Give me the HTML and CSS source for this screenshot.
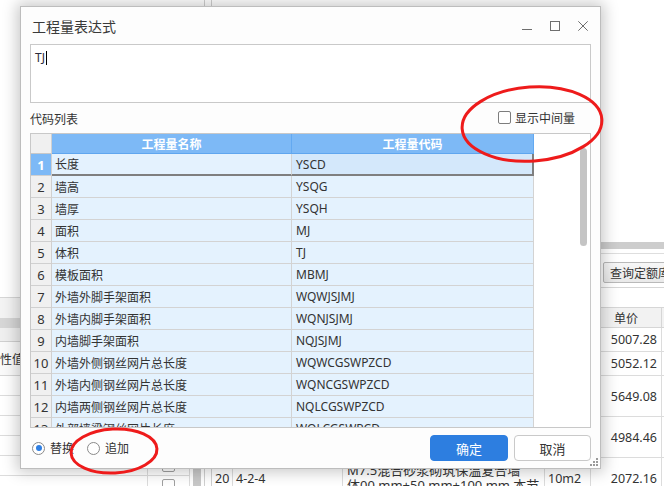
FILE: index.html
```html
<!DOCTYPE html>
<html lang="zh-CN">
<head>
<meta charset="utf-8">
<title>工程量表达式</title>
<link rel="stylesheet" href="styles.css">
</head>
<body>
<div class="app">
  <div class="left-pane">
    <div class="lp-top"></div>
    <div class="lp-cap"></div>
    <div class="lp-band"></div>
    <div class="lp-sub"></div>
    <div class="lp-body">
      <div class="lp-table">
        <div class="lp-head"><span class="lp-head-text">属性值</span></div>
        <div class="lp-row"><div class="lp-cell"></div><div class="lp-chk"></div></div>
        <div class="lp-row"><div class="lp-cell"></div><div class="lp-chk"></div></div>
        <div class="lp-row"><div class="lp-cell"></div><div class="lp-chk"></div></div>
        <div class="lp-row"><div class="lp-cell"></div><div class="lp-chk"></div></div>
        <div class="lp-row"><div class="lp-cell"></div><div class="lp-chk"><span class="cb"></span></div></div>
        <div class="lp-row"><div class="lp-cell"></div><div class="lp-chk"><span class="cb"></span></div></div>
      </div>
      <div class="lp-vscroll"><div class="lp-thumb"></div></div>
    </div>
  </div>
  <div class="splitter"></div>
  <div class="main-pane">
    <div class="mp-top"></div>
    <div class="mp-hscroll"></div>
    <div class="mp-gap"></div>
    <div class="mp-toolbar"><button class="tb-btn">查询定额库</button></div>
    <div class="mp-gap2"></div>
    <div class="mt">
      <div class="mt-h"></div><div class="mt-h"></div><div class="mt-h"></div><div class="mt-h"></div><div class="mt-h center">单价</div><div class="mt-h"></div>
      <div class="mt-c"></div><div class="mt-c"></div><div class="mt-c"></div><div class="mt-c"></div><div class="mt-c num">5007.28</div><div class="mt-c"></div>
      <div class="mt-c"></div><div class="mt-c"></div><div class="mt-c"></div><div class="mt-c"></div><div class="mt-c num">5052.12</div><div class="mt-c"></div>
      <div class="mt-c"></div><div class="mt-c"></div><div class="mt-c"></div><div class="mt-c"></div><div class="mt-c num">5649.08</div><div class="mt-c"></div>
      <div class="mt-c"></div><div class="mt-c"></div><div class="mt-c"></div><div class="mt-c"></div><div class="mt-c num">4984.46</div><div class="mt-c"></div>
      <div class="mt-c idx">20</div><div class="mt-c">4-2-4</div><div class="mt-c name"><span class="nl">M7.5混合砂浆砌筑保温复合墙</span><span class="nl">体00 mm+50 mm+100 mm 本节</span></div><div class="mt-c">10m2</div><div class="mt-c num">2072.16</div><div class="mt-c"></div>
    </div>
  </div>

  <div class="dialog">
    <div class="dlg-title">
      <span class="dlg-caption">工程量表达式</span>
      <div class="win-ctrls">
        <svg class="wc" viewBox="0 0 10 10"><path d="M0 8.5H10"/></svg>
        <svg class="wc" viewBox="0 0 10 10"><rect x="0.5" y="0.5" width="9" height="9"/></svg>
        <svg class="wc" viewBox="0 0 10 10"><path d="M0.3 0.3L9.7 9.7M9.7 0.3L0.3 9.7"/></svg>
      </div>
    </div>
    <div class="expr-box"><span class="expr-text">TJ</span><span class="caret"></span></div>
    <div class="list-bar">
      <span class="list-label">代码列表</span>
      <label class="chk"><span class="chk-box"></span>显示中间量</label>
    </div>
    <div class="grid-box">
      <div class="grid">
        <div class="c-corner"></div><div class="c-hd">工程量名称</div><div class="c-hd">工程量代码</div>
        <div class="c-no sel">1</div><div class="c-name cur">长度</div><div class="c-code cur cur-cell">YSCD</div>
        <div class="c-no">2</div><div class="c-name">墙高</div><div class="c-code">YSQG</div>
        <div class="c-no">3</div><div class="c-name">墙厚</div><div class="c-code">YSQH</div>
        <div class="c-no">4</div><div class="c-name">面积</div><div class="c-code">MJ</div>
        <div class="c-no">5</div><div class="c-name">体积</div><div class="c-code">TJ</div>
        <div class="c-no">6</div><div class="c-name">模板面积</div><div class="c-code">MBMJ</div>
        <div class="c-no">7</div><div class="c-name">外墙外脚手架面积</div><div class="c-code">WQWJSJMJ</div>
        <div class="c-no">8</div><div class="c-name">外墙内脚手架面积</div><div class="c-code">WQNJSJMJ</div>
        <div class="c-no">9</div><div class="c-name">内墙脚手架面积</div><div class="c-code">NQJSJMJ</div>
        <div class="c-no">10</div><div class="c-name">外墙外侧钢丝网片总长度</div><div class="c-code">WQWCGSWPZCD</div>
        <div class="c-no">11</div><div class="c-name">外墙内侧钢丝网片总长度</div><div class="c-code">WQNCGSWPZCD</div>
        <div class="c-no">12</div><div class="c-name">内墙两侧钢丝网片总长度</div><div class="c-code">NQLCGSWPZCD</div>
        <div class="c-no">13</div><div class="c-name">外部墙梁钢丝网片长度</div><div class="c-code">WQLCGSWPCD</div>
      </div>
      <div class="g-side"><div class="g-thumb"></div></div>
    </div>
    <div class="dlg-foot">
      <label class="radio on"><span class="rb"></span>替换</label>
      <label class="radio"><span class="rb"></span>追加</label>
      <div class="btns">
        <button class="btn primary">确定</button>
        <button class="btn">取消</button>
      </div>
    </div>
    <svg class="grip" viewBox="0 0 8 8"><rect x="6" y="0" width="2" height="2"/><rect x="3" y="3" width="2" height="2"/><rect x="6" y="3" width="2" height="2"/><rect x="0" y="6" width="2" height="2"/><rect x="3" y="6" width="2" height="2"/><rect x="6" y="6" width="2" height="2"/></svg>
  </div>

  <svg class="annot" viewBox="0 0 664 486">
    <ellipse cx="532" cy="124" rx="70" ry="37" transform="rotate(-4 532 124)"/>
    <ellipse cx="114" cy="451" rx="43" ry="22" transform="rotate(-3 114 451)"/>
  </svg>
</div>
</body>
</html>
```

FILE: styles.css
```css
* { box-sizing: border-box; }
html, body { margin: 0; padding: 0; }
body {
  width: 664px; height: 486px; overflow: hidden;
  font-family: "Noto Sans", "Noto Sans CJK SC", sans-serif;
  font-size: 12px; color: #333; background: #fff;
}
.app { position: relative; width: 664px; height: 486px; display: flex; overflow: hidden; background: #fff; }

/* ---------- background: left pane ---------- */
.left-pane { width: 205px; flex: none; border-right: 1px solid #d0d0d0; display: flex; flex-direction: column; }
.lp-top { height: 298px; flex: none; border-bottom: 1px solid #d6d6d6; }
.lp-cap { height: 20px; flex: none; background: #f3f3f3; }
.lp-band { height: 10px; flex: none; background: #d6d6d6; }
.lp-sub { height: 14px; flex: none; background: #efefef; border-bottom: 1px solid #d0d0d0; }
.lp-body { flex: 1; display: flex; overflow: hidden; }
.lp-table { flex: 1; }
.lp-head { height: 34px; display: flex; align-items: center; border-bottom: 1px solid #d6d6d6; background: #fafafa; font-size: 12px; }
.lp-head-text { margin-left: -12px; }
.lp-row { height: 20px; display: grid; grid-template-columns: 148px 1fr; border-bottom: 1px solid #dcdcdc; }
.lp-cell { border-right: 1px solid #dcdcdc; }
.lp-chk { display: flex; align-items: center; justify-content: center; border-right: 1px solid #dcdcdc; }
.cb { width: 13px; height: 13px; border: 1px solid #a0a0a0; border-radius: 2px; background: #fff; }
.lp-vscroll { width: 14px; flex: none; padding: 64px 3px 0 3px; }
.lp-thumb { width: 8px; height: 100px; background: #c8c8c8; }

.splitter { width: 7px; flex: none; border-right: 1px solid #d0d0d0; }

/* ---------- background: main pane ---------- */
.main-pane { flex: 1; display: flex; flex-direction: column; min-width: 0; }
.mp-top { height: 242px; flex: none; }
.mp-hscroll { height: 7px; flex: none; background: #cdcdcd; }
.mp-gap { height: 5px; flex: none; border-bottom: 1px solid #dedede; }
.mp-toolbar { height: 34px; flex: none; padding: 8px 0 0 391px; border-bottom: 1px solid #d6d6d6; display: flex; }
.tb-btn {
  height: 21px; padding: 0 6px; white-space: nowrap;
  font: 12px "Noto Sans", "Noto Sans CJK SC", sans-serif; color: #333;
  background: linear-gradient(#f7f7f7, #e9e9e9); border: 1px solid #b9b9b9; border-radius: 2px;
}
.mp-gap2 { height: 19px; flex: none; }
.mt {
  display: grid;
  grid-template-columns: 21px 110px 202px 46px 71px 1fr;
  grid-template-rows: 21px 24px 24px 41px 41px 42px;
  font-size: 12px;
}
.mt-h { background: #f2f2f2; border-right: 1px solid #d6d6d6; border-bottom: 1px solid #d6d6d6; border-top: 1px solid #d6d6d6; display: flex; align-items: center; }
.mt-h.center { justify-content: center; }
.mt-c { border-right: 1px solid #dcdcdc; border-bottom: 1px solid #dcdcdc; display: flex; align-items: center; padding-left: 3px; white-space: nowrap; overflow: hidden; font-size: 12.5px; }
.mt-c.num { justify-content: flex-end; padding: 0 4px 0 0; }
.mt-c.idx { padding-left: 3px; }
.mt-c.name { flex-direction: column; align-items: flex-start; justify-content: flex-start; padding: 5px 0 0 4px; font-size: 13px; }
.nl { display: block; height: 15px; line-height: 15px; }

/* ---------- dialog ---------- */
.dialog {
  position: absolute; left: 20px; top: 6px; width: 581px; height: 463px;
  background: #fdfdfd; border: 1px solid #bdbdbd;
  box-shadow: 0 0 14px 3px rgba(0, 0, 0, 0.22);
  display: flex; flex-direction: column; padding: 0 9px;
}
.dlg-title { height: 37px; flex: none; display: flex; align-items: center; justify-content: space-between; margin: 0 -9px; padding: 0 12px 0 11px; }
.dlg-caption { font-size: 14px; color: #3a3a3a; }
.win-ctrls { display: flex; gap: 18px; align-items: center; }
.wc { width: 10px; height: 10px; fill: none; stroke: #6e6e6e; stroke-width: 1; display: block; }

.expr-box { height: 59px; flex: none; border: 1px solid #c9c9c9; background: #fff; padding: 5px 0 0 4px; display: flex; align-items: flex-start; }
.expr-text { font-size: 12px; line-height: 16px; color: #2c2c3c; }
.caret { width: 1px; height: 14px; background: #000; margin: 1px 0 0 1px; }

.list-bar { height: 30px; flex: none; display: flex; align-items: center; justify-content: space-between; padding: 2px 16px 0 0; }
.list-label { font-size: 12px; color: #333; }
.chk { display: flex; align-items: center; gap: 4px; font-size: 12px; color: #333; margin-top: -3px; }
.chk-box { width: 13px; height: 13px; border: 1px solid #7d7d7d; border-radius: 2px; background: #fff; }

.grid-box { height: 295px; flex: none; border: 1px solid #c8c8c8; display: flex; overflow: hidden; background: #fff; }
.grid {
  flex: none; align-self: flex-start;
  display: grid; grid-template-columns: 21px 240px 242px;
  grid-template-rows: 20px; grid-auto-rows: 22px;
  font-size: 12px;
}
.c-corner { background: #f0f0f0; border-right: 1px solid #d0d0d0; border-bottom: 1px solid #c8c8c8; }
.c-hd {
  background: #7db9f6; border-right: 1px solid #63a9f1; border-bottom: 1px solid #5fa6ef;
  color: #fff; font-weight: bold; display: flex; align-items: center; justify-content: center;
}
.c-no {
  background: #f0f0f0; border-right: 1px solid #d0d0d0; border-bottom: 1px solid #d0d0d0;
  display: flex; align-items: center; justify-content: center; font-size: 13px; color: #333;
}
.c-no.sel { background: #7db9f6; color: #fff; font-weight: bold; }
.c-name, .c-code {
  background: #e4f2fe; border-right: 1px solid #d3d3d3; border-bottom: 1px solid #d3d3d3;
  display: flex; align-items: center; padding-left: 3px; white-space: nowrap; color: #333;
}
.c-code { padding-left: 4px; }
.c-name.cur, .c-code.cur { border-bottom: 2px solid #7f7f7f; }
.c-code.cur-cell { background: #d4e8fb; border-right: 2px solid #7f7f7f; }
.g-side { flex: 1; padding: 14px 0 0 46px; }
.g-thumb { width: 7px; height: 98px; border-radius: 4px; background: #c4c4c4; }

.dlg-foot { height: 40px; flex: none; display: flex; align-items: center; padding-left: 2px; }
.radio { display: flex; align-items: center; gap: 5px; font-size: 12px; color: #333; margin-right: 13px; }
.rb { width: 13px; height: 13px; border: 1px solid #8a8a8a; border-radius: 50%; background: #fff; display: flex; align-items: center; justify-content: center; }
.radio.on .rb::after { content: ""; width: 6px; height: 6px; border-radius: 50%; background: #2f7fe3; }
.btns { margin-left: auto; display: flex; gap: 6px; }
.btn {
  width: 77px; height: 26px; border-radius: 4px; border: 1px solid #c9c9c9; background: #fff;
  font: 13px "Noto Sans", "Noto Sans CJK SC", sans-serif; color: #333; padding: 0;
}
.btn.primary { width: 78px; background: #2d7ee0; border-color: #2d7ee0; color: #fff; }
.grip { position: absolute; right: 2px; bottom: 2px; width: 8px; height: 8px; fill: #9a9a9a; }

.annot { position: absolute; left: 0; top: 0; width: 664px; height: 486px; pointer-events: none; fill: none; stroke: #ee1b1b; stroke-width: 3; }
```
